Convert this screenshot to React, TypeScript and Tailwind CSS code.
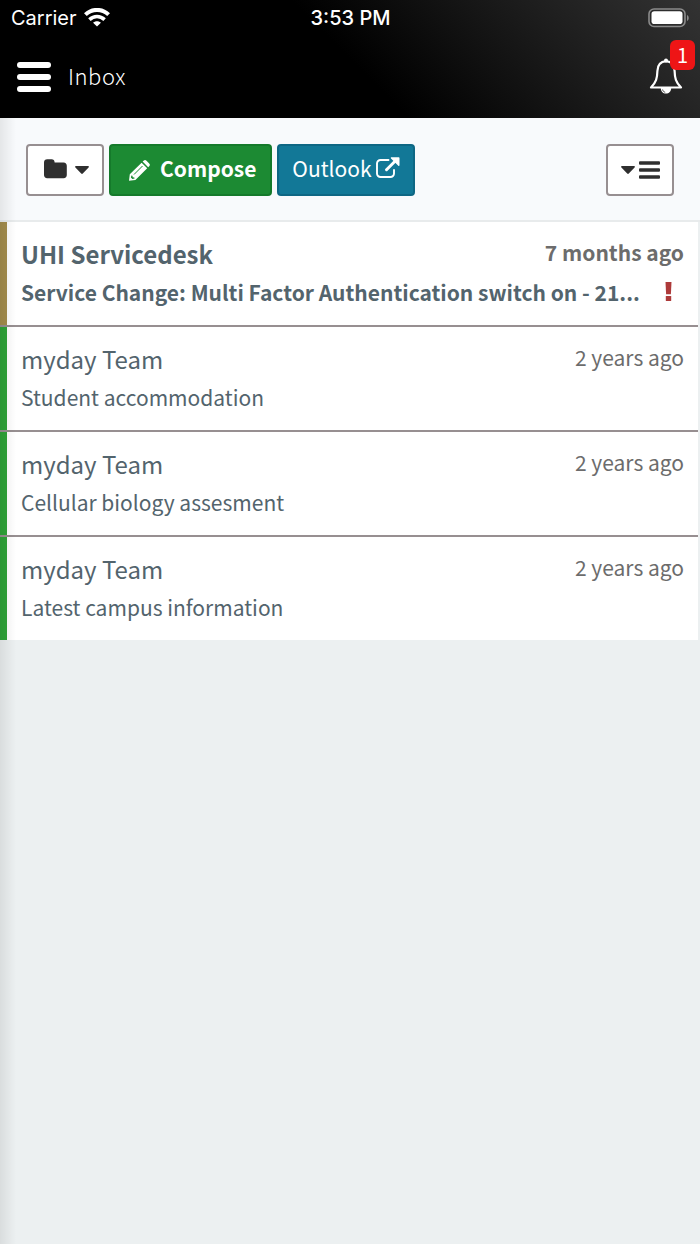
import React from "react";

type Message = {
  sender: string;
  subject: string;
  age: string;
  unread?: boolean;
  important?: boolean;
};

const messages: Message[] = [
  {
    sender: "UHI Servicedesk",
    subject: "Service Change: Multi Factor Authentication switch on - 21...",
    age: "7 months ago",
    unread: true,
    important: true,
  },
  { sender: "myday Team", subject: "Student accommodation", age: "2 years ago" },
  { sender: "myday Team", subject: "Cellular biology assesment", age: "2 years ago" },
  { sender: "myday Team", subject: "Latest campus information", age: "2 years ago" },
];

function WifiIcon() {
  return (
    <svg width="26" height="20" viewBox="0 0 26 20" aria-hidden="true" fill="none" stroke="#fff" strokeWidth="4">
      <path d="M1.400 6.600C8 .3 18 .3 24.600 6.600" />
      <path d="M5.400 11.600c4.400-4.100 10.800-4.100 15.200 0" strokeWidth="3.600" />
      <path d="M13 18.500l-3.900-3.700c2.200-2 5.600-2 7.800 0z" fill="#fff" stroke="none" />
    </svg>
  );
}

function BatteryIcon() {
  return (
    <svg width="42" height="20" viewBox="0 0 42 20" aria-hidden="true">
      <rect x="1" y="1" width="36" height="17.500" rx="5" fill="none" stroke="#8b8b8b" strokeWidth="1.6" />
      <rect x="3.500" y="3.300" width="31" height="12.800" rx="2.800" fill="#fff" />
      <path d="M39 7c2.300.8 2.300 5.200 0 6z" fill="#8b8b8b" />
    </svg>
  );
}

function MenuIcon() {
  return (
    <svg width="34" height="30" viewBox="0 0 34 30" aria-hidden="true" fill="#fff">
      <rect width="34" height="6" rx="3" />
      <rect y="12" width="34" height="6" rx="3" />
      <rect y="24" width="34" height="6" rx="3" />
    </svg>
  );
}

function BellIcon() {
  return (
    <svg width="34" height="37" viewBox="0 0 34 37" aria-hidden="true" fill="none" stroke="#fff" strokeWidth="2.200" strokeLinejoin="round">
      <path d="M17 3.200C11 3.800 8.500 7.500 8.400 13c-.2 7-1.100 11-6.400 16.500h30C26.700 24 25.800 20 25.600 13 25.500 7.500 23 3.800 17 3.200z" />
      <circle cx="17" cy="2.400" r="2" fill="#fff" stroke="none" />
      <path d="M11.800 30h10.400c0 3.500-2.200 5.600-5.200 5.600s-5.200-2.100-5.200-5.600z" fill="#fff" stroke="none" />
      <path d="M13.600 31.500c.2 1.500 1.200 2.500 2.600 2.700" stroke="#333" strokeWidth=".9" />
    </svg>
  );
}

function FolderIcon() {
  return (
    <svg width="23" height="20" viewBox="0 0 23 20" aria-hidden="true" fill="#2f2f2f">
      <path d="M0 3.400C0 1.500 1.400.3 3.200.3h4.400c1.800 0 3 1.200 3 3v.3h9c2 0 3.200 1.300 3.200 3.200v9.300c0 2-1.200 3.200-3.200 3.200H3.200C1.300 19.300 0 18 0 16.100z" />
    </svg>
  );
}

function CaretIcon() {
  return (
    <svg width="14" height="8" viewBox="0 0 14 8" aria-hidden="true" fill="#2f2f2f">
      <path d="M.9 0h12.200c.8 0 1.100.8.500 1.400L7.800 7.500c-.5.500-1.100.5-1.600 0L.4 1.400C-.2.800.1 0 .9 0z" />
    </svg>
  );
}

function PencilIcon() {
  return (
    <svg width="21" height="21" viewBox="0 0 21 21" aria-hidden="true">
      <path fill="#fff" d="M13.600 1.600l1-.9c.9-.9 2-.9 2.900 0l2.700 2.700c.9.900.9 2 0 2.900l-1 1zM12.600 2.700l5.600 5.600L6.400 20.100 0 20.700l.8-6.400z" />
      <path fill="none" stroke="#1c8a33" strokeWidth="1" d="M13.500 6L5 14.500" />
      <path fill="#1c8a33" d="M2.400 15.400l1.100.3.200 1.600 1.600.2.300 1-2.200.6-1.500-1.500z" />
    </svg>
  );
}

function ExternalIcon() {
  return (
    <svg width="24" height="22" viewBox="0 0 24 22" aria-hidden="true" fill="none" stroke="#fff">
      <path strokeWidth="1.900" strokeLinecap="round" d="M12.500 3H4.500A3.500 3.500 0 0 0 1 6.500v10A3.500 3.500 0 0 0 4.500 20h10a3.500 3.500 0 0 0 3.500-3.500V13" />
      <path strokeWidth="3" strokeLinecap="round" d="M10.500 12.700l9-9" />
      <path fill="#fff" stroke="none" d="M15.500.3h7.300c.4 0 .7.300.7.700v7.300c0 .7-.7 1-1.200.5l-7.300-7.300c-.5-.5-.2-1.200.5-1.200z" />
    </svg>
  );
}

function ListIcon() {
  return (
    <svg width="21" height="18" viewBox="0 0 21 18" aria-hidden="true" fill="#2f2f2f">
      <rect y=".3" width="21" height="3.400" rx="1" />
      <rect y="7.300" width="21" height="3.400" rx="1" />
      <rect y="14.300" width="21" height="3.400" rx="1" />
    </svg>
  );
}

function ImportantIcon() {
  return (
    <svg width="7" height="19" viewBox="0 0 7 19" role="img" aria-label="Important" fill="#ad3a3a">
      <path d="M.5 0h6L5.900 12.300H1.100z" />
      <rect x=".8" y="14" width="5.400" height="5" rx=".6" />
    </svg>
  );
}

function MessageRow({ message }: { message: Message }) {
  const { sender, subject, age, unread, important } = message;
  return (
    <li className="border-b-2 border-[#978f91] last:border-b-0">
      <a
        href="#message"
        className={`flex h-[103px] flex-col border-l-[7px] bg-white pt-[13px] pr-[14px] pl-[14px] ${
          unread ? "border-[#a48d4c] font-bold" : "border-[#2ea438] font-normal"
        }`}
      >
        <span className="flex items-start justify-between gap-4">
          <span className="text-[24px] leading-[38px] text-[#53646d]">{sender}</span>
          <span className="shrink-0 text-[21px] leading-[34px] text-[#6c6c6c]">{age}</span>
        </span>
        <span className="flex items-center justify-between gap-3 pr-3">
          <span className="text-[21px] leading-[38px] text-[#53646d]">{subject}</span>
          {important && (
            <span className="shrink-0 pb-[2px]">
              <ImportantIcon />
            </span>
          )}
        </span>
      </a>
    </li>
  );
}

export default function App() {
  return (
    <div className="flex min-h-screen flex-col bg-[#ecf0f1] font-['Noto_Sans_CJK_SC',sans-serif]">
      <header className="bg-[linear-gradient(45deg,#000_50%,#333_100%)] text-white">
        <div className="flex h-9 items-center px-[10px] font-['Inter',sans-serif] text-[20px] leading-6">
          <span className="flex flex-1 items-center gap-[7px] pl-px">
            Carrier <WifiIcon />
          </span>
          <span className="text-center font-medium">3:53 PM</span>
          <span className="flex flex-1 justify-end">
            <BatteryIcon />
          </span>
        </div>
        <nav className="flex h-[82px] items-center pr-[17px] pl-[17px]">
          <button type="button" aria-label="Menu">
            <MenuIcon />
          </button>
          <h1 className="ml-[17px] pb-1 text-[22px] leading-8 font-light tracking-wide">Inbox</h1>
          <button type="button" aria-label="Notifications" className="relative ml-auto pb-[2px]">
            <BellIcon />
            <span className="absolute -top-[18px] left-[21px] flex h-[30px] w-[25px] items-center justify-center rounded-md bg-[#ee1516] text-[20px]">
              1
            </span>
          </button>
        </nav>
      </header>

      <div className="relative flex grow flex-col">
        <div className="flex items-center gap-[5px] border-b-2 border-[#e8ebec] bg-[#f8fafc] px-[26px] pt-[26px] pb-6">
          <button
            type="button"
            aria-label="Folders"
            className="flex h-[52px] w-[78px] items-center justify-center gap-2 rounded border-2 border-[#978f91] bg-white pl-[2px]"
          >
            <span className="pb-[2px]">
              <FolderIcon />
            </span>
            <CaretIcon />
          </button>
          <button
            type="button"
            className="flex h-[52px] items-center gap-[10px] rounded border-2 border-[#157a2b] bg-[#1c8a33] pr-[14px] pl-[18px] text-[21px] font-bold text-white"
          >
            <PencilIcon />
            <span className="pb-[2px]">Compose</span>
          </button>
          <a
            href="#outlook"
            className="flex h-[52px] items-center gap-1 rounded border-2 border-[#0e6784] bg-[#127897] px-[13px] text-[21px] text-white"
          >
            <span className="pb-[2px]">Outlook</span>
            <span className="pb-1">
              <ExternalIcon />
            </span>
          </a>
          <button
            type="button"
            aria-label="List options"
            className="ml-auto flex h-[52px] w-[68px] items-center justify-center gap-1 rounded border-2 border-[#978f91] bg-white pb-px"
          >
            <CaretIcon />
            <ListIcon />
          </button>
        </div>

        <main className="pr-[2px]">
          <ul>
            {messages.map((message) => (
              <MessageRow key={message.subject} message={message} />
            ))}
          </ul>
        </main>

        <div className="pointer-events-none absolute inset-y-0 left-0 w-4 bg-linear-to-r from-black/8 to-transparent" />
      </div>
    </div>
  );
}
